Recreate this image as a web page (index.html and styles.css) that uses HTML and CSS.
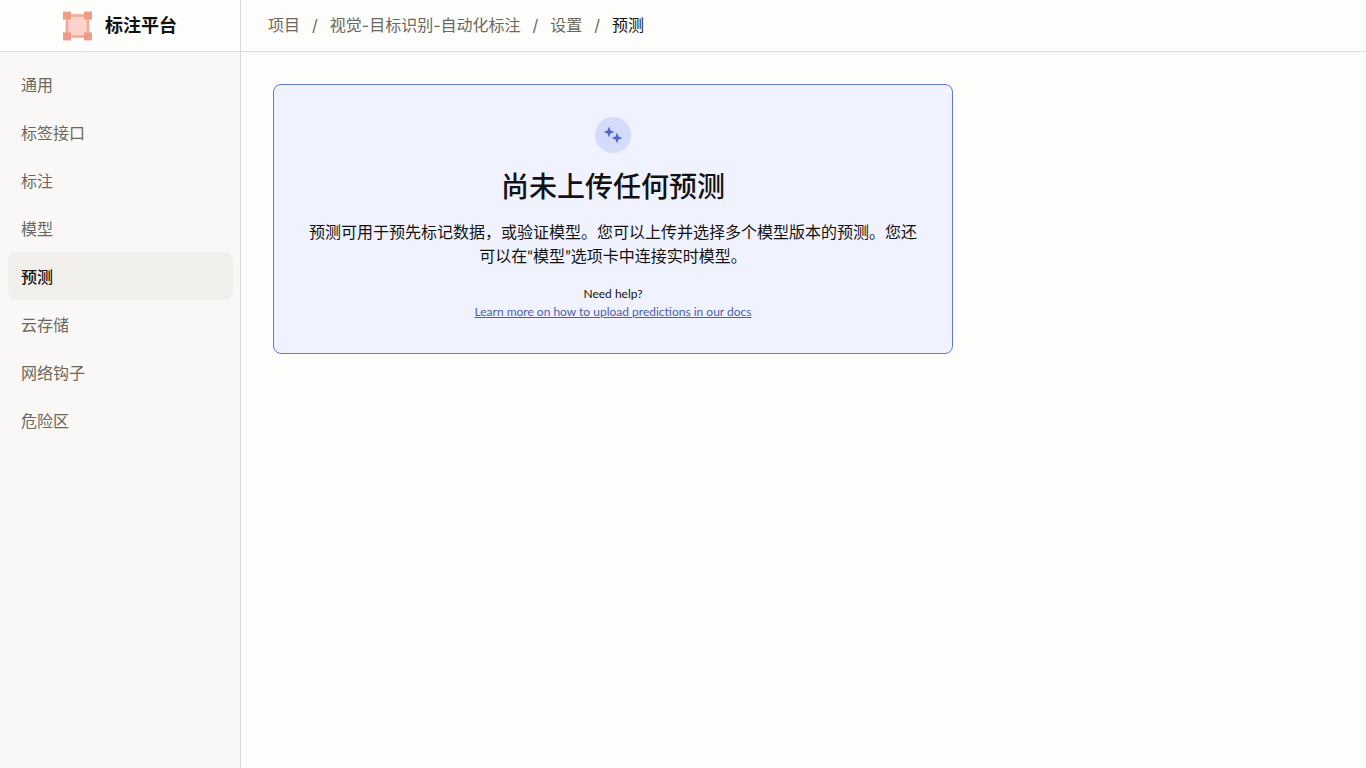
FILE: index.html
```html
<!DOCTYPE html>
<html lang="zh-CN">
<head>
  <meta charset="UTF-8" />
  <meta name="viewport" content="width=device-width, initial-scale=1.0" />
  <title>标注平台 - 预测</title>
  <link rel="stylesheet" href="styles.css">
</head>
<body>
  <header class="topbar">
    <a class="brand" href="#">
      <svg class="brand-logo" viewBox="0 0 30 30" aria-hidden="true">
        <rect x="4" y="4.5" width="21" height="21" fill="#ffd3cb" stroke="#f4a999" stroke-width="2.6" />
        <g fill="#ee9b88">
          <rect x="0" y="0.6" width="8" height="8" />
          <rect x="21" y="0.6" width="8" height="8" />
          <rect x="0" y="21.4" width="8" height="8" />
          <rect x="21" y="21.4" width="8" height="8" />
        </g>
      </svg>
      <span class="brand-name">标注平台</span>
    </a>
    <nav class="breadcrumbs" aria-label="breadcrumbs">
      <a href="#">项目</a>
      <span class="separator">/</span>
      <a href="#">视觉-目标识别-自动化标注</a>
      <span class="separator">/</span>
      <a href="#">设置</a>
      <span class="separator">/</span>
      <span class="current">预测</span>
    </nav>
  </header>

  <div class="layout">
    <nav class="sidebar" aria-label="设置">
      <a class="menu-item" href="#">通用</a>
      <a class="menu-item" href="#">标签接口</a>
      <a class="menu-item" href="#">标注</a>
      <a class="menu-item" href="#">模型</a>
      <a class="menu-item active" href="#">预测</a>
      <a class="menu-item" href="#">云存储</a>
      <a class="menu-item" href="#">网络钩子</a>
      <a class="menu-item" href="#">危险区</a>
    </nav>

    <main class="content">
      <section class="empty-state">
        <div class="empty-icon">
          <svg viewBox="0 0 24 24" width="24" height="24" fill="#4f68cf" aria-hidden="true">
            <path d="M8 3.5 L9.5 7.5 L13.5 9 L9.5 10.5 L8 14.5 L6.5 10.5 L2.5 9 L6.5 7.5 Z" />
            <path d="M16 9.5 L17.5 13.5 L21.5 15 L17.5 16.5 L16 20.5 L14.5 16.5 L10.5 15 L14.5 13.5 Z" />
          </svg>
        </div>
        <h1>尚未上传任何预测</h1>
        <p class="description">预测可用于预先标记数据，或验证模型。您可以上传并选择多个模型版本的预测。您还可以在“模型”选项卡中连接实时模型。</p>
        <div class="help">
          <p>Need help?</p>
          <a href="#">Learn more on how to upload predictions in our docs</a>
        </div>
      </section>
    </main>
  </div>
</body>
</html>
```

FILE: styles.css
```css
* {
  box-sizing: border-box;
}
body {
  margin: 0;
  min-height: 100vh;
  display: flex;
  flex-direction: column;
  font-family: Lato, "Noto Sans CJK SC", sans-serif;
  font-size: 16px;
  line-height: 24px;
  background: #fdfdfc;
  color: #131210;
}
h1, p {
  margin: 0;
}
a {
  color: inherit;
  text-decoration: none;
}

/* Header */
.topbar {
  display: flex;
  height: 52px;
  border-bottom: 1px solid #dcdcda;
}
.brand {
  display: flex;
  align-items: center;
  justify-content: center;
  gap: 12px;
  width: 241px;
  border-right: 1px solid #dcdcda;
}
.brand-logo {
  width: 30px;
  height: 30px;
}
.brand-name {
  padding-bottom: 2px;
  font-size: 18px;
  font-weight: 700;
}
.breadcrumbs {
  display: flex;
  align-items: center;
  gap: 12px;
  padding: 0 0 2px 27px;
  font-family: Inter, "Noto Sans CJK SC", sans-serif;
  color: #6b6860;
}
.breadcrumbs .current {
  color: #131210;
}

/* Page body */
.layout {
  display: flex;
  flex: 1;
}
.sidebar {
  width: 241px;
  padding: 8px 7px 8px 8px;
  background: #f9f8f6;
  border-right: 1px solid #dcdcda;
}
.menu-item {
  display: block;
  padding: 13px 13px 11px;
  border-radius: 8px;
  color: #6b6860;
}
.menu-item.active {
  background: #f0efeb;
  color: #131210;
  font-weight: 500;
}
.content {
  flex: 1;
  padding: 32px;
}

/* Empty state card */
.empty-state {
  display: flex;
  flex-direction: column;
  align-items: center;
  max-width: 680px;
  padding: 32px;
  border: 1px solid #617ada;
  border-radius: 8px;
  background: #f0f2ff;
  text-align: center;
}
.empty-icon {
  display: flex;
  align-items: center;
  justify-content: center;
  width: 36px;
  height: 36px;
  margin-bottom: 16px;
  border-radius: 50%;
  background: #d5dcfb;
}
.empty-state h1 {
  margin-bottom: 17px;
  font-size: 28px;
  line-height: 34px;
  font-weight: 500;
}
.description {
  margin-bottom: 17px;
}
.help {
  font-size: 12px;
  line-height: 18px;
}
.help a {
  color: #4c5fa9;
  text-decoration: underline;
}
```
